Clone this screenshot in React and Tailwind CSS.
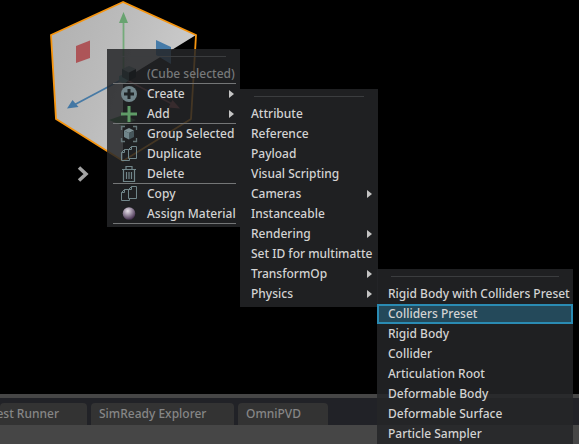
const primItems = [
  { label: '(Cube selected)', icon: 'cube', disabled: true, line: true },
  { label: 'Create', icon: 'create', sub: true },
  { label: 'Add', icon: 'add', sub: true, line: true },
  { label: 'Group Selected', icon: 'group' },
  { label: 'Duplicate', icon: 'copy' },
  { label: 'Delete', icon: 'trash', line: true },
  { label: 'Copy', icon: 'copy' },
  { label: 'Assign Material', icon: 'material', line: true },
];

const addItems = [
  { label: 'Attribute' },
  { label: 'Reference' },
  { label: 'Payload' },
  { label: 'Visual Scripting' },
  { label: 'Cameras', sub: true },
  { label: 'Instanceable' },
  { label: 'Rendering', sub: true },
  { label: 'Set ID for multimatte' },
  { label: 'TransformOp', sub: true },
  { label: 'Physics', sub: true },
];

const physicsItems = [
  { label: 'Rigid Body with Colliders Preset' },
  { label: 'Colliders Preset', active: true },
  { label: 'Rigid Body' },
  { label: 'Collider' },
  { label: 'Articulation Root' },
  { label: 'Deformable Body' },
  { label: 'Deformable Surface' },
  { label: 'Particle Sampler' },
];

function Cube({ top, left, right }) {
  return (
    <>
      <path d="M9 1l7 3-7 3.500L2 4z" fill={top} />
      <path d="M2 4l7 3.500V16l-7-4z" fill={left} />
      <path d="M16 4L9 7.500V16l7-4z" fill={right} />
    </>
  );
}

function Icon({ name }) {
  return (
    <svg viewBox="0 0 18 18" className="size-[18px] shrink-0" fill="none" aria-hidden="true">
      {name === 'cube' && <Cube top="#303537" left="#23292b" right="#191c1e" />}
      {name === 'create' && (
        <>
          <circle cx="9" cy="9" r="8" fill="#71858b" />
          <path d="M9 4v10M4 9h10" stroke="#1f2426" strokeWidth="3" />
        </>
      )}
      {name === 'add' && <path d="M9 1v16M1 9h16" stroke="#5f9c67" strokeWidth="3" />}
      {name === 'group' && (
        <>
          <path d="M1.500 5V1.500H5M13 1.500h3.500V5M16.500 13v3.500H13M5 16.500H1.500V13" stroke="#66777a" strokeWidth="1.300" />
          <path d="M9 3l5 2.500L9 8 4 5.500z" fill="#7d9094" />
          <path d="M4 5.500L9 8v6.500L4 12z" fill="#70858a" />
          <path d="M14 5.500L9 8v6.500l5-2.500z" fill="#46565b" />
        </>
      )}
      {name === 'copy' && (
        <g stroke="#71868a" strokeWidth="1">
          <path d="M8.500 13.500v-9l3-3h5v12z" />
          <path d="M8.500 4.500h3v-3" />
          <path d="M8.500 4.500h-4l-3 3v8h8v-2" />
          <path d="M1.500 7.500h3v-3" />
        </g>
      )}
      {name === 'trash' && (
        <g stroke="#71868a" strokeWidth="1.200">
          <path d="M2 4.500h14M6 4V1.500h6V4" />
          <path d="M3.500 4.500v12h11v-12" />
          <path d="M6.500 7v7M9 7v7M11.500 7v7" />
        </g>
      )}
      {name === 'material' && (
        <>
          <defs>
            <radialGradient id="ball" cx="0.4" cy="0.3" r="0.7">
              <stop offset="0" stopColor="#e6e0e8" />
              <stop offset="0.45" stopColor="#9f92a6" />
              <stop offset="1" stopColor="#45304f" />
            </radialGradient>
          </defs>
          <circle cx="9" cy="8.500" r="6.300" fill="url(#ball)" />
        </>
      )}
    </svg>
  );
}

function MenuItem({ item }) {
  const tone = item.disabled ? 'text-[#77797a]' : 'text-[#d3d3d3]';
  const line = item.line ? 'border-b border-[#747677]' : '';
  const inset = item.icon ? 'mx-1 ml-1.5 pl-[7px]' : 'pl-[11px]';
  const active = item.active ? 'bg-[#24495a] outline-2 -outline-offset-2 outline-[#2a8bb3]' : '';
  return (
    <li className="flex flex-col">
      <button
        type="button"
        role="menuitem"
        disabled={item.disabled}
        className={`flex h-5 items-center whitespace-nowrap text-left ${tone} ${line} ${inset} ${active}`}
      >
        {item.icon && <Icon name={item.icon} />}
        <span className={item.icon ? 'ml-[9px] flex-1' : 'flex-1'}>{item.label}</span>
        {item.sub && (
          <svg viewBox="0 0 5 10" className={item.icon ? 'mr-0.5 h-2.5 w-[5px]' : 'mr-1.5 h-2.5 w-[5px]'} aria-hidden="true">
            <path d="M0 1l5 4-5 4z" fill="#c4c4c4" />
          </svg>
        )}
      </button>
    </li>
  );
}

function Menu({ items, label, place }) {
  return (
    <ul
      role="menu"
      aria-label={label}
      className={`absolute flex flex-col bg-[#242628]/85 pb-[3px] ${place}`}
    >
      <li role="separator" className="mx-3.5 mt-[7px] mb-[7px] h-px bg-[#3b3d3f]" />
      {items.map((item) => (
        <MenuItem key={item.label} item={item} />
      ))}
    </ul>
  );
}

function CubeGizmo() {
  return (
    <svg viewBox="0 0 200 165" className="block h-[165px] w-[200px]" aria-hidden="true">
      <defs>
        <linearGradient id="face" x1="0" y1="0" x2="1" y2="0.4">
          <stop offset="0" stopColor="#b0b0b0" />
          <stop offset="0.5" stopColor="#bcbcbc" />
          <stop offset="1" stopColor="#cccccc" />
        </linearGradient>
      </defs>
      <path d="M123 2L51 35l5 84 67 42V80l73-45z" fill="url(#face)" />
      <path d="M123 115l13 5-13 6-14-6z" fill="#3f7d48" />
      <path d="M123 2L51 35l5 84 67 42 68-42 5-84z" fill="none" stroke="#f6950f" strokeWidth="1.800" />
      <path d="M123.500 80V22" stroke="#74ab7a" strokeWidth="1.800" />
      <path d="M123.500 12l4.500 11h-9z" fill="#68a370" />
      <path d="M123 79L74 105" stroke="#477aa5" strokeWidth="1.800" />
      <path d="M67 108.500l5.500-8.500 6 7z" fill="#4377a4" />
      <path d="M125 79l49 26" stroke="#934c50" strokeWidth="1.600" />
      <path d="M180 108.500l-7.500-8.500-4 7.500z" fill="#a34a4e" />
      <path d="M76 46l14-5.500V58l-14 5z" fill="#ad5558" />
      <path d="M156 40l15 7v17l-15-9z" fill="#467ba8" />
      <path d="M119 76l5-2 4 2v5l-4 3-5-3z" fill="#5b9a9b" />
    </svg>
  );
}

const tab = 'flex h-[22px] items-center rounded-t bg-[#333333] whitespace-nowrap text-[#868686]';

export default function App() {
  return (
    <main className="relative flex h-screen flex-col overflow-hidden bg-black font-['Noto_Sans','Open_Sans',sans-serif] text-[12px] font-medium leading-5">
      <section className="flex-1">
        <CubeGizmo />
        <svg viewBox="0 0 12 18" className="ml-[77px] h-[18px] w-3" fill="none" aria-hidden="true">
          <path d="M2 2.500L9 9l-7 6.500" stroke="#a3a3a3" strokeWidth="3.500" />
        </svg>
      </section>

      <footer className="border-t-4 border-[#464646] bg-[#212227]">
        <nav className="flex gap-1 pt-[5px]" aria-label="Panels">
          <button type="button" className={`${tab} w-[87px] justify-end overflow-hidden pr-7`}>Test Runner</button>
          <button type="button" className={`${tab} w-[143px] pl-2`}>SimReady Explorer</button>
          <button type="button" className={`${tab} w-[90px] pl-2`}>OmniPVD</button>
        </nav>
        <div className="h-[19px] bg-[#464646]" />
      </footer>

      <Menu items={primItems} label="Prim" place="left-[107px] top-[49px] w-[133px]" />
      <Menu items={addItems} label="Add" place="left-[240px] top-[89px] w-[138px]" />
      <Menu items={physicsItems} label="Physics" place="left-[377px] top-[269px] w-[196px]" />
    </main>
  );
}
